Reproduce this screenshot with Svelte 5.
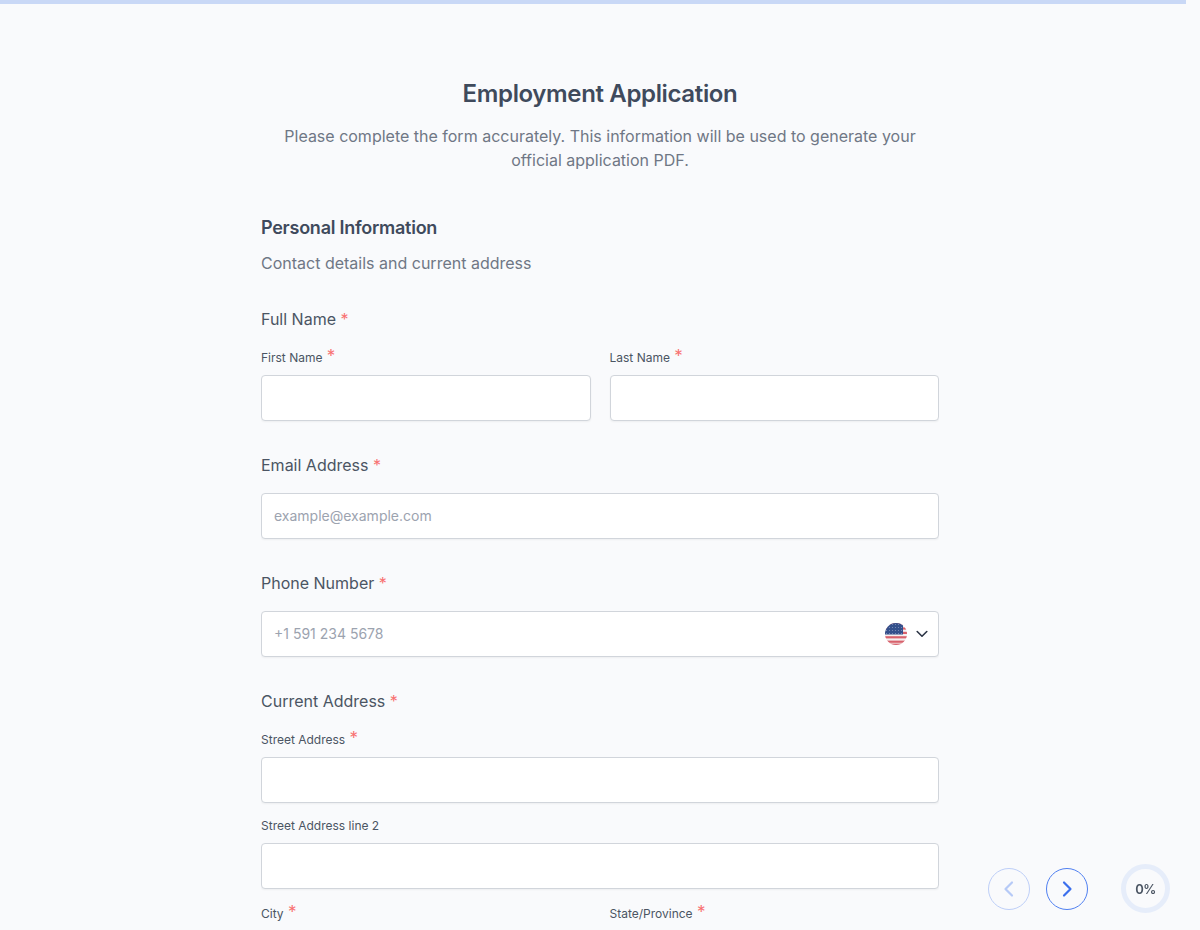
<script>
    let form = $state({ first: '', last: '', email: '', phone: '', street: '', street2: '', city: '', state: '' });
</script>

<div class="progress"></div>

<main class="page">
    <header class="intro">
        <h1>Employment Application</h1>
        <p>Please complete the form accurately. This information will be used to generate your official application PDF.</p>
    </header>

    <form class="form">
        <h2>Personal Information</h2>
        <p class="sub">Contact details and current address</p>

        <div class="group name-group">
            <div class="label">Full Name <span class="req">*</span></div>
            <div class="row">
                <label class="field">
                    <span class="small">First Name <span class="req">*</span></span>
                    <input type="text" bind:value={form.first} />
                </label>
                <label class="field">
                    <span class="small">Last Name <span class="req">*</span></span>
                    <input type="text" bind:value={form.last} />
                </label>
            </div>
        </div>

        <label class="group">
            <span class="label">Email Address <span class="req">*</span></span>
            <input type="email" placeholder="example@example.com" bind:value={form.email} />
        </label>

        <label class="group">
            <span class="label">Phone Number <span class="req">*</span></span>
            <span class="phone">
                <input type="tel" placeholder="+1 591 234 5678" bind:value={form.phone} />
                <span class="country">
                    <svg class="flag" viewBox="0 0 22 22" width="22" height="22" aria-hidden="true">
                        <defs>
                            <clipPath id="flag-clip"><circle cx="11" cy="11" r="11" /></clipPath>
                            <pattern id="stars" width="3" height="3" patternUnits="userSpaceOnUse">
                                <rect width="3" height="3" fill="#34508c" />
                                <circle cx="1.5" cy="1.5" r="0.55" fill="#7f90ba" />
                            </pattern>
                        </defs>
                        <g clip-path="url(#flag-clip)">
                            <rect width="22" height="22" fill="#f6f0f0" />
                            <rect y="0" width="22" height="2.2" fill="#d8616c" />
                            <rect y="4.4" width="22" height="2.2" fill="#d8616c" />
                            <rect y="8.8" width="22" height="2.2" fill="#d8616c" />
                            <rect y="13.2" width="22" height="2.2" fill="#d8616c" />
                            <rect y="17.6" width="22" height="2.2" fill="#d8616c" />
                            <rect y="20.6" width="22" height="1.4" fill="#d8616c" />
                            <rect width="18" height="11.5" fill="url(#stars)" />
                        </g>
                    </svg>
                    <svg class="chev" viewBox="0 0 12 8" width="12" height="8" aria-hidden="true">
                        <path d="M1.2 1.5 6 6.2l4.8-4.7" fill="none" stroke="#2b3445" stroke-width="1.6" stroke-linecap="round" stroke-linejoin="round" />
                    </svg>
                </span>
            </span>
        </label>

        <div class="group address-group">
            <div class="label">Current Address <span class="req">*</span></div>
            <label class="field">
                <span class="small">Street Address <span class="req">*</span></span>
                <input type="text" bind:value={form.street} />
            </label>
            <label class="field">
                <span class="small">Street Address line 2</span>
                <input type="text" bind:value={form.street2} />
            </label>
            <div class="row">
                <label class="field">
                    <span class="small">City <span class="req">*</span></span>
                    <input type="text" bind:value={form.city} />
                </label>
                <label class="field">
                    <span class="small">State/Province <span class="req">*</span></span>
                    <input type="text" bind:value={form.state} />
                </label>
            </div>
        </div>
    </form>
</main>

<div class="nav">
    <button class="round" disabled aria-label="Previous">
        <svg viewBox="0 0 24 24" width="24" height="24"><path d="M15 5.5 8.5 12l6.5 6.5" fill="none" stroke="currentColor" stroke-width="2.2" stroke-linecap="round" stroke-linejoin="round" /></svg>
    </button>
    <button class="round" aria-label="Next">
        <svg viewBox="0 0 24 24" width="24" height="24"><path d="M9 5.5l6.5 6.5L9 18.5" fill="none" stroke="currentColor" stroke-width="2.2" stroke-linecap="round" stroke-linejoin="round" /></svg>
    </button>
    <div class="percent">0%</div>
</div>

<style>
    :global(body) {
        margin: 0;
        background: #f9fafc;
        font-family: Inter, "Liberation Sans", sans-serif;
        color: #4b5563;
    }
    .progress {
        width: 1186px;
        height: 4px;
        background: #c9d8f6;
    }
    .page {
        width: 678px;
        height: 925px;
        margin: 0 auto;
        overflow: hidden;
    }
    .intro {
        padding-top: 73px;
        text-align: center;
    }
    h1 {
        margin: 0;
        font-size: 24px;
        line-height: 34px;
        font-weight: 600;
        letter-spacing: -0.36px;
        color: #3f4a5c;
    }
    .intro p {
        margin: 13px 0 0;
        padding: 0 20px;
        font-size: 16px;
        line-height: 24px;
        color: #6f7785;
    }
    h2 {
        margin: 43px 0 0;
        font-size: 18px;
        line-height: 26px;
        font-weight: 600;
        letter-spacing: -0.25px;
        color: #3f4a5c;
    }
    .sub {
        margin: 10px 0 0;
        font-size: 16px;
        line-height: 24px;
        color: #6f7785;
    }
    .group {
        display: block;
        margin-top: 32px;
    }
    .label {
        display: block;
        font-size: 16px;
        line-height: 24px;
        color: #4b5563;
    }
    .req {
        color: #f87171;
    }
    .row {
        display: grid;
        grid-template-columns: 1fr 1fr;
        gap: 19px;
    }
    .field {
        display: block;
    }
    .small {
        display: block;
        font-size: 12px;
        line-height: 18px;
        color: #4b5563;
    }
    .small .req {
        font-size: 17px;
        line-height: 18px;
        margin-left: 1px;
    }
    .name-group .row {
        margin-top: 16px;
    }
    .field input {
        margin-top: 8px;
    }
    .group > input,
    .phone {
        margin-top: 16px;
    }
    input {
        display: block;
        box-sizing: border-box;
        width: 100%;
        height: 46px;
        padding: 0 12px 2px;
        background: #fff;
        border: 1px solid #d1d5db;
        border-radius: 4px;
        box-shadow: 0 1px 2px rgba(0, 0, 0, 0.05);
        font: inherit;
        font-size: 14px;
        color: #4b5563;
        outline: none;
    }
    input::placeholder {
        color: #9ca3af;
        opacity: 1;
    }
    .phone {
        display: block;
        position: relative;
    }
    .country {
        position: absolute;
        top: 12px;
        right: 11px;
        display: flex;
        align-items: center;
        gap: 8px;
    }
    .country .flag {
        margin-right: 1px;
    }
    .address-group > .field:first-of-type {
        margin-top: 16px;
    }
    .address-group > .field + .field {
        margin-top: 14px;
    }
    .address-group .row {
        margin-top: 14px;
    }
    .nav {
        position: fixed;
        left: 988px;
        top: 864px;
        display: flex;
        align-items: center;
    }
    .round {
        box-sizing: border-box;
        display: flex;
        align-items: center;
        justify-content: center;
        width: 42px;
        height: 42px;
        margin-right: 16px;
        padding: 0;
        background: transparent;
        border: 1.5px solid #4f7ff0;
        border-radius: 50%;
        color: #3b6fed;
    }
    .round:disabled {
        opacity: 0.35;
    }
    .percent {
        box-sizing: border-box;
        width: 49px;
        height: 49px;
        margin-left: 17px;
        border: 5px solid #e6edfa;
        border-radius: 50%;
        display: flex;
        align-items: center;
        justify-content: center;
        font-size: 13px;
        font-weight: 600;
        color: #4b5563;
        letter-spacing: -0.5px;
    }
</style>
